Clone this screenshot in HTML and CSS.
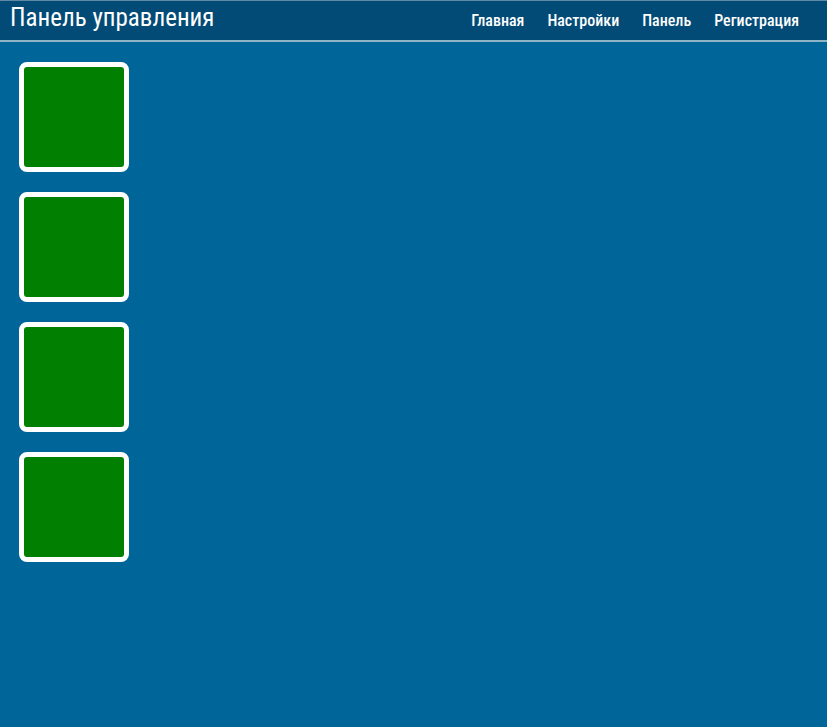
FILE: index.html
```html
<!DOCTYPE html>
<html lang="ru">
<head>
  <meta charset="UTF-8">
  <title>Панель управления</title>
  <link rel="stylesheet" href="styles.css">
</head>
<body>

  <header class="topbar">
    <h1 class="brand">Панель управления</h1>
    <nav class="menu">
      <a href="#">Главная</a>
      <a href="#">Настройки</a>
      <a href="#">Панель</a>
      <a href="#">Регистрация</a>
    </nav>
  </header>

  <main class="tiles">
    <div class="tile"></div>
    <div class="tile"></div>
    <div class="tile"></div>
    <div class="tile"></div>
  </main>

</body>
</html>
```

FILE: styles.css
```css
html, body {
  height: 100%;
}

body {
  margin: 0;
  font-family: Roboto, 'DejaVu Sans Condensed', sans-serif;
  font-stretch: 75%;
  background-color: #006699;
  color: white;
}

.topbar {
  display: flex;
  align-items: center;
  justify-content: space-between;
  height: 39px;
  padding: 0 28px 0 10px;
  background-color: #024b76;
  border-top: 1px solid #5f8aa6;
  border-bottom: 2px solid #8db3c7;
}

.brand {
  margin: 0;
  font-size: 25px;
  font-weight: 450;
  font-stretch: 81%;
  margin-top: -6px;
}

.menu {
  display: flex;
  gap: 23px;
}

.menu a {
  color: white;
  text-decoration: none;
  font-size: 16px;
  font-weight: 500;
}

.tiles {
  display: flex;
  flex-direction: column;
  gap: 20px;
  padding: 20px 19px;
}

.tile {
  width: 100px;
  height: 100px;
  background-color: #007f00;
  border: 5px solid white;
  border-radius: 8px;
}
```
